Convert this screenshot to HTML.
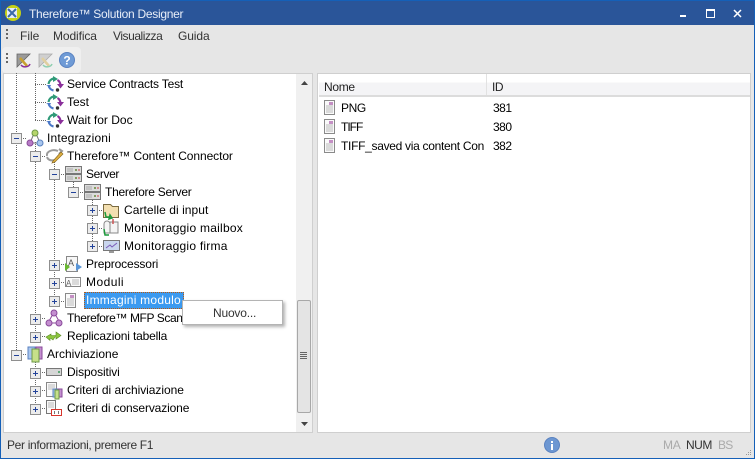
<!DOCTYPE html>
<html><head><meta charset="utf-8"><style>
html,body{margin:0;padding:0}
body{width:755px;height:459px;position:relative;overflow:hidden;background:#e6e6e6;font:12px "Liberation Sans",sans-serif;color:#000}
div{position:absolute}
.t{white-space:nowrap;line-height:18px;height:18px}
.m{color:#333;top:27px}
</style></head><body>
<div style="left:0;top:0;width:755px;height:25px;background:#2a5599;border-top:1px solid #1560b8;box-sizing:border-box"></div>
<div style="left:0;top:0;width:1px;height:459px;background:#1560b8"></div>
<div style="left:754px;top:0;width:1px;height:459px;background:#1560b8"></div>
<div style="left:0;top:458px;width:755px;height:1px;background:#1560b8"></div>
<div class="t" style="left:29px;top:5px;color:#e8eef8;letter-spacing:-.28px">Therefore™ Solution Designer</div>
<div style="left:2px;top:47px;width:79px;height:26px;background:#efefef;border-radius:4px"></div>
<div class="t m" style="left:20px">File</div>
<div class="t m" style="left:53px;letter-spacing:-.1px">Modifica</div>
<div class="t m" style="left:113px;letter-spacing:-.45px">Visualizza</div>
<div class="t m" style="left:178px;letter-spacing:-.1px">Guida</div>
<!-- panes -->
<div style="left:3px;top:73px;width:310px;height:360px;background:#fff;border:1px solid #cfcfcf;box-sizing:border-box"></div>
<div style="left:317px;top:73px;width:434px;height:360px;background:#fff;border:1px solid #cfcfcf;box-sizing:border-box"></div>
<div style="left:296px;top:74px;width:16px;height:358px;background:#f0f0f0"></div>
<div style="left:297px;top:300px;width:14px;height:113px;background:#e4e4e4;border:1px solid #a8a8a8;box-sizing:border-box;border-radius:2px"></div>
<div style="left:319px;top:74px;width:431px;height:23px;background:linear-gradient(#fff 0,#fff 40%,#f4f4f6 40%,#f4f4f6);border-bottom:2px solid #dcdcdc;box-sizing:border-box"></div>
<div style="left:486px;top:74px;width:1px;height:21px;background:#e2e2e2"></div>
<svg style="position:absolute;left:0;top:0" width="755" height="459" viewBox="0 0 755 459" shape-rendering="crispEdges">
<defs>
<g id="mn"><rect x="-4.500" y="-4.500" width="10" height="10" fill="#ececec" stroke="#8f8f8f"/><rect x="-2" y="0" width="5" height="1" fill="#23439a"/></g>
<g id="pl"><rect x="-4.500" y="-4.500" width="10" height="10" fill="#ececec" stroke="#8f8f8f"/><rect x="-2" y="0" width="5" height="1" fill="#23439a"/><rect x="0" y="-2" width="1" height="5" fill="#23439a"/></g>
<g id="wf" shape-rendering="auto" fill="none" stroke-width="2.200"><path d="M2.500 7A6.500 6.500 0 0 1 7.500 1.500" stroke="#2f9a78"/><path d="M11.500 3A6.500 6.500 0 0 1 14.500 8" stroke="#8a2f9a"/><path d="M2.500 8A6.500 6.500 0 0 0 7.500 13.500" stroke="#4a78c8"/><path d="M7 -1l5 3-5 3z" fill="#2f9a78" stroke="none"/><path d="M11 7h7l-3.500 4.500z" fill="#8a2f9a" stroke="none"/><path d="M0 8h5l-1 2z" fill="#4a78c8" stroke="none"/><circle cx="11.500" cy="13" r="1.700" fill="#333" stroke="none"/></g>
<g id="doc"><rect x=".5" y=".5" width="10" height="14" fill="#fafafa" stroke="#8a8a8a"/><rect x="5" y="2" width="4" height="3" fill="#c48fc4"/><path d="M2 6h7M2 8h7M2 10h7M2 12h7" stroke="#bbb"/></g>
<g id="srv"><rect x=".5" y=".5" width="16" height="7" fill="#dcdcdc" stroke="#777"/><rect x=".5" y="8.500" width="16" height="7" fill="#dcdcdc" stroke="#777"/><path d="M3 2v4M5 2v4M7 2v4M3 10v4M5 10v4M7 10v4" stroke="#aaa"/><path d="M10 4h2M13 4h2M10 12h2M13 12h2" stroke="#c44"/><path d="M11 3v2M11 11v2" stroke="#3a3"/></g>
</defs>
<g fill="#666">
<path d="M6 29h2v2H6zM6 33h2v2H6zM6 37h2v2H6zM6 53h2v2H6zM6 57h2v2H6zM6 61h2v2H6z"/>
</g>
<g fill="none" stroke="#666" stroke-dasharray="1 1">
<path d="M16.500 73V354M35.500 73V120M35.500 142V336M54.500 162V300M73.500 180V192M92.500 198V246M35.500 360V408"/>
<path d="M35 84.500h11M35 102.500h11M35 120.500h11M21 138.500h5M40 156.500h5M59 174.500h6M78 192.500h6M97 210.500h6M97 228.500h6M97 246.500h6M59 264.500h6M59 282.500h6M59 301.500h6M40 318.500h6M40 336.500h6M21 354.500h5M40 372.500h6M40 390.500h6M40 408.500h6"/>
</g>
<use href="#mn" x="16" y="138"/><use href="#mn" x="35" y="156"/><use href="#mn" x="54" y="174"/><use href="#mn" x="73" y="192"/>
<use href="#pl" x="92" y="210"/><use href="#pl" x="92" y="228"/><use href="#pl" x="92" y="246"/>
<use href="#pl" x="54" y="265"/><use href="#pl" x="54" y="283"/><use href="#pl" x="54" y="301"/>
<use href="#pl" x="35" y="319"/><use href="#pl" x="35" y="337"/><use href="#mn" x="16" y="355"/>
<use href="#pl" x="35" y="373"/><use href="#pl" x="35" y="391"/><use href="#pl" x="35" y="409"/>
<use href="#wf" x="46" y="77"/><use href="#wf" x="46" y="95"/><use href="#wf" x="46" y="113"/>
<g shape-rendering="auto">
<!-- integrazioni -->
<path d="M35 131L30 143H40Z" fill="none" stroke="#777"/><circle cx="35" cy="133" r="3" fill="#b6d56c" stroke="#6f9a4a"/><circle cx="30" cy="143" r="3" fill="#b77cc6" stroke="#8a4a9a"/><circle cx="40" cy="143" r="3" fill="#a9c6ee" stroke="#5a82c0"/>
<!-- connector -->
<path d="M47 156c-1-5 6-7 11-5M59 149l3 2-3 3M47 157c1 3 4 4 8 3" fill="none" stroke="#9a9a9a" stroke-width="2"/><path d="M53 161l8-9 2 2-8 8-3 1z" fill="#e0b040" stroke="#8a6a20" stroke-width=".7"/>
<!-- folder -->
<path d="M103.500 204.500h7l2 2h6v11h-15z" fill="#f3dfb0" stroke="#7a6a40"/><path d="M105 212l1 5h4M110 215l-1 4 3-1z" fill="none" stroke="#1c9a3c" stroke-width="1.500"/>
<!-- mailbox -->
<path d="M104 224a3 3 0 0 1 6 0v9h-6zM110 222h8v11h-8z" fill="#f5f5f5" stroke="#888"/><path d="M113 219v5" stroke="#c55" stroke-width="1.500"/><path d="M104 229l1 6h4" fill="none" stroke="#1c9a3c" stroke-width="1.500"/>
<!-- firma -->
<rect x="103.500" y="240.500" width="16" height="10" fill="#c9d6ee" stroke="#777"/><path d="M106 248l4-3 2 2 5-4" fill="none" stroke="#7a5ab8"/><path d="M109 252h5" stroke="#777" stroke-width="1.500"/>
<!-- preproc -->
<rect x="66.500" y="256.500" width="11" height="15" fill="#f7f7f7" stroke="#888"/><text x="68" y="266" font-size="9" fill="#555">A</text><path d="M76 263l6 4-6 4z" fill="#5a96d8"/><path d="M65 263l5 4-5 4z" fill="#6ab832"/>
<!-- moduli -->
<rect x="65.500" y="277.500" width="15" height="9" fill="#fafafa" stroke="#888"/><text x="66" y="286" font-size="8" fill="#666">A</text><path d="M72 280h7M72 282h7M72 284h7" stroke="#bbb"/>
<!-- scan -->
<path d="M54 312L48 323H60Z" fill="none" stroke="#8a4a9a"/><circle cx="54" cy="313" r="3" fill="#c48fd0" stroke="#8a4a9a"/><circle cx="49" cy="323" r="3" fill="#c48fd0" stroke="#8a4a9a"/><circle cx="59" cy="323" r="3" fill="#c48fd0" stroke="#8a4a9a"/>
<!-- replica -->
<path d="M46 337l5-3v1.500h5V332l5 3.500-5 3.500v-2h-1l-2 3-2-1.500h-1v2z" fill="#8cc63f" stroke="#5a8a20" stroke-width=".6"/>
<!-- archiv -->
<rect x="28" y="347" width="7" height="12" fill="#a9c6ee" stroke="#5a82c0"/><rect x="36" y="347" width="6" height="12" fill="#c48fd0" stroke="#8a4a9a"/><rect x="32" y="349" width="7" height="13" fill="#c6e08a" stroke="#6f9a4a"/>
<!-- disp -->
<rect x="46.500" y="368.500" width="15" height="7" fill="#d6d6d6" stroke="#777"/>
<path d="M58 372h2M59 371v2" stroke="#3a9a5a"/>
<!-- crit -->
<rect x="46.500" y="382.500" width="10" height="14" fill="#fafafa" stroke="#888"/><path d="M48 385h7M48 387h7M48 389h7" stroke="#bbb"/><rect x="53" y="389" width="5" height="8" fill="#a9c6ee" stroke="#5a82c0"/><rect x="58" y="389" width="4" height="8" fill="#c48fd0" stroke="#8a4a9a"/><rect x="55" y="390" width="4" height="9" fill="#c6e08a" stroke="#6f9a4a"/>
<rect x="46.500" y="400.500" width="9" height="13" fill="#fafafa" stroke="#777"/><path d="M48 403h6M48 405h6M48 407h6" stroke="#bbb"/><rect x="51.500" y="409.500" width="10" height="6" fill="#fff" stroke="#d8352c" stroke-width="1"/><path d="M54.500 411v3M58.500 411v3" stroke="#777"/>
<!-- toolbar icons -->
<path d="M17 54h13l-13 13z" fill="#9a9a9a" stroke="#666" stroke-width=".8"/><path d="M20 58l7 8" stroke="#c8a030" stroke-width="2.500"/><path d="M21 65a5 4 0 0 0 9-1" fill="none" stroke="#8a2f9a" stroke-width="1.500"/>
<path d="M39 54h13l-13 13z" fill="#cfcfcf" stroke="#aaa" stroke-width=".8"/><path d="M42 58l7 8" stroke="#e0cfa0" stroke-width="2.500"/><path d="M43 65a5 4 0 0 0 9-1" fill="none" stroke="#8fcfb0" stroke-width="1.500"/>
<circle cx="67" cy="60" r="7.500" fill="#6f9bd6" stroke="#5a82c0"/><text x="67" y="64.500" font-size="12" font-weight="bold" fill="#fff" text-anchor="middle">?</text>
<!-- logo -->
<circle cx="13" cy="13" r="8" fill="#c5d116"/><rect x="7" y="8" width="10" height="10" fill="#e8edf5"/><path d="M8 9l8 8M16 9l-8 8" stroke="#3a6aa8" stroke-width="2"/>
<!-- status info -->
<circle cx="552" cy="445" r="7.500" fill="#6d97d2" stroke="#5a82c0"/><rect x="551" y="444" width="2" height="6" fill="#fff"/><rect x="551" y="441" width="2" height="2" fill="#fff"/>
</g>
<use href="#doc" x="65" y="293"/>
<use href="#doc" x="324" y="100"/><use href="#doc" x="324" y="119"/><use href="#doc" x="324" y="138"/>
<use href="#srv" x="65" y="166"/><use href="#srv" x="84" y="184"/>
<!-- window buttons -->
<rect x="680" y="15" width="6" height="2" fill="#fff"/>
<rect x="706.500" y="9.500" width="8" height="8" fill="none" stroke="#fff"/><rect x="706" y="9" width="9" height="2" fill="#fff"/>
<path d="M734 10l7 7M741 10l-7 7" stroke="#fff" stroke-width="1.500" shape-rendering="auto"/>
<!-- scrollbar arrows and grip -->
<path d="M301 85h7l-3.500-4z" fill="#444" shape-rendering="auto"/><path d="M301 422h7l-3.500 4z" fill="#444" shape-rendering="auto"/>
<path d="M300 352.500h7M300 354.500h7M300 356.500h7M300 358.500h7" stroke="#666"/>
<!-- grip -->
<path d="M750 450h1v1h-1zM748 452h1v1h-1zM750 452h1v1h-1zM746 454h1v1h-1zM748 454h1v1h-1zM750 454h1v1h-1z" fill="#999"/>
</svg>
<div class="t" style="left:67px;top:75px;letter-spacing:-.17px">Service Contracts Test</div>
<div class="t" style="left:67px;top:93px">Test</div>
<div class="t" style="left:67px;top:111px">Wait for Doc</div>
<div class="t" style="left:47px;top:129px;letter-spacing:.16px">Integrazioni</div>
<div class="t" style="left:67px;top:147px;letter-spacing:-.08px">Therefore™ Content Connector</div>
<div class="t" style="left:86px;top:165px;letter-spacing:-.4px">Server</div>
<div class="t" style="left:105px;top:183px;letter-spacing:-.26px">Therefore Server</div>
<div class="t" style="left:124px;top:201px;letter-spacing:.06px">Cartelle di input</div>
<div class="t" style="left:124px;top:219px;letter-spacing:.25px">Monitoraggio mailbox</div>
<div class="t" style="left:124px;top:237px;letter-spacing:.24px">Monitoraggio firma</div>
<div class="t" style="left:86px;top:255px;letter-spacing:-.14px">Preprocessori</div>
<div class="t" style="left:86px;top:273px;letter-spacing:.45px">Moduli</div>
<div class="t" style="left:84px;top:292px;width:100px;height:17px;line-height:17px;background:#3b9af0;color:#fff;outline:1px dotted #b85a10;outline-offset:-1px;padding-left:2px;box-sizing:border-box;letter-spacing:.24px">Immagini modulo</div>
<div class="t" style="left:67px;top:309px;letter-spacing:-.4px">Therefore™ MFP Scan</div>
<div class="t" style="left:67px;top:327px;letter-spacing:-.16px">Replicazioni tabella</div>
<div class="t" style="left:47px;top:345px">Archiviazione</div>
<div class="t" style="left:67px;top:363px;letter-spacing:-.12px">Dispositivi</div>
<div class="t" style="left:67px;top:381px;letter-spacing:-.05px">Criteri di archiviazione</div>
<div class="t" style="left:67px;top:399px;letter-spacing:-.13px">Criteri di conservazione</div>
<div style="left:182px;top:300px;width:101px;height:25px;background:#fff;border:1px solid #b4b4b4;box-sizing:border-box;box-shadow:2px 2px 3px rgba(0,0,0,.3)"></div>
<div class="t" style="left:213px;top:304px;color:#333;letter-spacing:-.2px">Nuovo...</div>
<div class="t" style="left:324px;top:78px;color:#222;letter-spacing:-.3px">Nome</div>
<div class="t" style="left:492px;top:78px;color:#222;letter-spacing:-.5px">ID</div>
<div class="t" style="left:341px;top:99px;letter-spacing:-.4px">PNG</div><div class="t" style="left:493px;top:99px;letter-spacing:-.5px">381</div>
<div class="t" style="left:341px;top:118px;letter-spacing:-1px">TIFF</div><div class="t" style="left:493px;top:118px;letter-spacing:-.5px">380</div>
<div class="t" style="left:341px;top:137px;width:144px;overflow:hidden;letter-spacing:-.3px">TIFF_saved via content Con</div><div class="t" style="left:493px;top:137px;letter-spacing:-.5px">382</div>
<div class="t" style="left:7px;top:436px;color:#333;letter-spacing:-.33px">Per informazioni, premere F1</div>
<div class="t" style="left:663px;top:436px;color:#aaa;letter-spacing:-.3px">MA</div>
<div class="t" style="left:686px;top:436px;color:#333;letter-spacing:-.5px">NUM</div>
<div class="t" style="left:718px;top:436px;color:#aaa;letter-spacing:-.8px">BS</div>
</body></html>
